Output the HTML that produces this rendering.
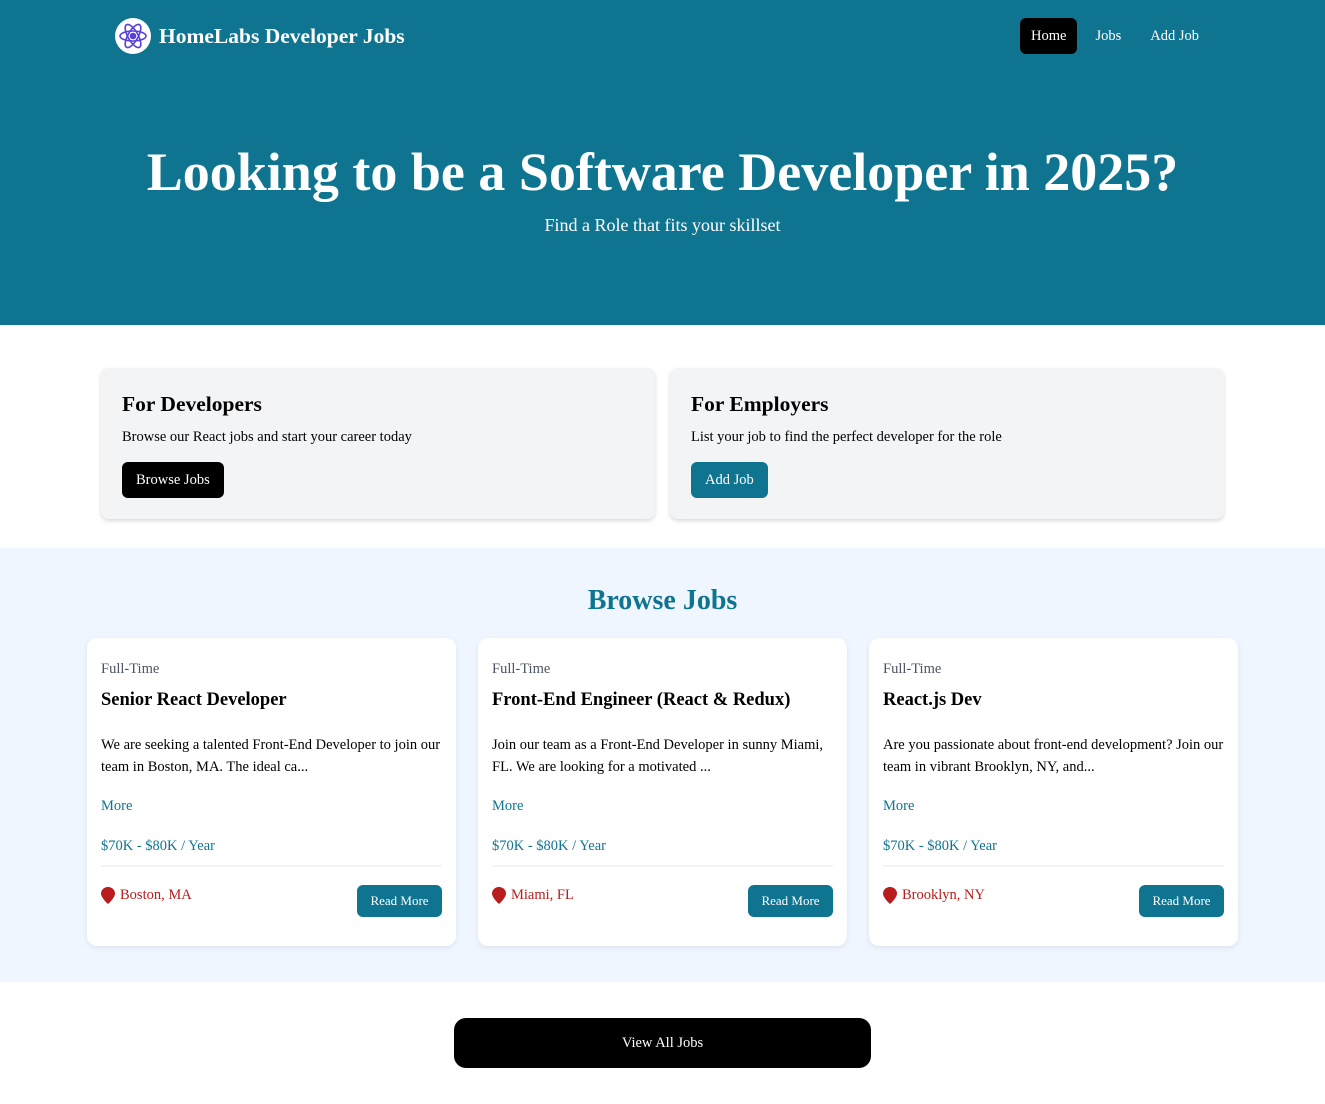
<!DOCTYPE html>
<html><head><meta charset="utf-8"><style>
*{box-sizing:border-box;margin:0;padding:0}
body{width:1325px;height:1104px;font-family:"Liberation Serif",serif;background:#fff;overflow:hidden}
.top{background:#0e7490;height:325px;position:relative;color:#fff}
.logo{position:absolute;left:115px;top:18px;display:flex;align-items:center}
.logo .c{width:36px;height:36px;border-radius:50%;background:#fff;display:flex;align-items:center;justify-content:center}
.logo span{font-size:21.5px;font-weight:bold;margin-left:8px}
.nav{position:absolute;right:115px;top:18px;display:flex}
.nav a{font-size:14.5px;color:#fff;padding:0 11px;height:36px;line-height:36px;border-radius:6px;margin-left:7px}
.nav a.on{background:#000}
h1{position:absolute;top:141px;width:100%;text-align:center;font-size:54px;font-weight:bold}
.sub{position:absolute;top:215px;width:100%;text-align:center;font-size:18px}
.box{position:absolute;top:368px;width:554px;height:151px;background:#f3f4f6;border-radius:8px;box-shadow:0 2px 4px rgba(0,0,0,.15);padding:24px 21px}
.box h2{font-size:21.5px;margin-bottom:12px}
.box p{font-size:14.5px;margin-bottom:16px}
.btn{display:inline-block;color:#fff;font-size:14.5px;padding:0 14px;height:36px;line-height:36px;border-radius:6px}
.jobs{position:absolute;top:548px;left:0;width:1325px;height:434px;background:#eff6ff}
.jobs h3{position:absolute;top:37px;width:100%;text-align:center;font-size:28px;color:#0e7490}
.card{position:absolute;top:90px;width:369px;height:308px;background:#fff;border-radius:10px;box-shadow:0 2px 6px rgba(0,0,0,.08);padding:0 14px}
.t{position:absolute;left:14px;top:23px;font-size:14.5px;color:#4b5563}
.n{position:absolute;left:14px;top:52px;font-size:18.5px;font-weight:bold}
.d{position:absolute;left:14px;top:96px;width:345px;font-size:14.5px;line-height:22px}
.m{position:absolute;left:14px;top:160px;font-size:14.5px;color:#0e7490}
.s{position:absolute;left:14px;top:200px;font-size:14.5px;color:#0e7490}
.hr{position:absolute;left:14px;right:14px;top:227px;border-top:2px solid #f3f4f6}
.loc{position:absolute;left:14px;top:249px;font-size:14.5px;color:#b91c1c;display:flex;align-items:center}
.loc svg{margin-right:5px}
.rm{position:absolute;right:14px;top:247px;width:85px;height:32px;line-height:32px;text-align:center;background:#0e7490;color:#fff;font-size:13px;border-radius:6px}
.va{position:absolute;left:454px;top:1018px;width:417px;height:50px;background:#000;color:#fff;border-radius:12px;text-align:center;line-height:50px;font-size:14.5px}
</style></head><body>
<div class="top">
<div class="logo"><div class="c"><svg width="32" height="32" viewBox="-16 -16 32 32" fill="none" stroke="#5b3fd6" stroke-width="1.6"><ellipse rx="13" ry="5"/><ellipse rx="13" ry="5" transform="rotate(60)"/><ellipse rx="13" ry="5" transform="rotate(120)"/><circle r="2.5" fill="#5b3fd6"/></svg></div><span>HomeLabs Developer Jobs</span></div>
<div class="nav"><a class="on">Home</a><a>Jobs</a><a>Add Job</a></div>
<h1>Looking to be a Software Developer in 2025?</h1>
<div class="sub">Find a Role that fits your skillset</div>
</div>
<div class="box" style="left:101px"><h2>For Developers</h2><p>Browse our React jobs and start your career today</p><span class="btn" style="background:#000">Browse Jobs</span></div>
<div class="box" style="left:670px"><h2>For Employers</h2><p>List your job to find the perfect developer for the role</p><span class="btn" style="background:#0e7490">Add Job</span></div>
<div class="jobs"><h3>Browse Jobs</h3>
<div class="card" style="left:87px"><div class="t">Full-Time</div><div class="n">Senior React Developer</div><div class="d">We are seeking a talented Front-End Developer to join our team in Boston, MA. The ideal ca...</div><div class="m">More</div><div class="s">$70K - $80K / Year</div><div class="hr"></div><div class="loc"><svg width="14" height="17" viewBox="0 0 14 17"><path d="M7 0C3 0 0 3 0 6.5 0 11 7 17 7 17S14 11 14 6.5C14 3 11 0 7 0Z" fill="#b91c1c"/></svg>Boston, MA</div><div class="rm">Read More</div></div>
<div class="card" style="left:478px"><div class="t">Full-Time</div><div class="n">Front-End Engineer (React &amp; Redux)</div><div class="d">Join our team as a Front-End Developer in sunny Miami, FL. We are looking for a motivated ...</div><div class="m">More</div><div class="s">$70K - $80K / Year</div><div class="hr"></div><div class="loc"><svg width="14" height="17" viewBox="0 0 14 17"><path d="M7 0C3 0 0 3 0 6.5 0 11 7 17 7 17S14 11 14 6.5C14 3 11 0 7 0Z" fill="#b91c1c"/></svg>Miami, FL</div><div class="rm">Read More</div></div>
<div class="card" style="left:869px"><div class="t">Full-Time</div><div class="n">React.js Dev</div><div class="d">Are you passionate about front-end development? Join our team in vibrant Brooklyn, NY, and...</div><div class="m">More</div><div class="s">$70K - $80K / Year</div><div class="hr"></div><div class="loc"><svg width="14" height="17" viewBox="0 0 14 17"><path d="M7 0C3 0 0 3 0 6.5 0 11 7 17 7 17S14 11 14 6.5C14 3 11 0 7 0Z" fill="#b91c1c"/></svg>Brooklyn, NY</div><div class="rm">Read More</div></div>
</div>
<div class="va">View All Jobs</div>
</body></html>
